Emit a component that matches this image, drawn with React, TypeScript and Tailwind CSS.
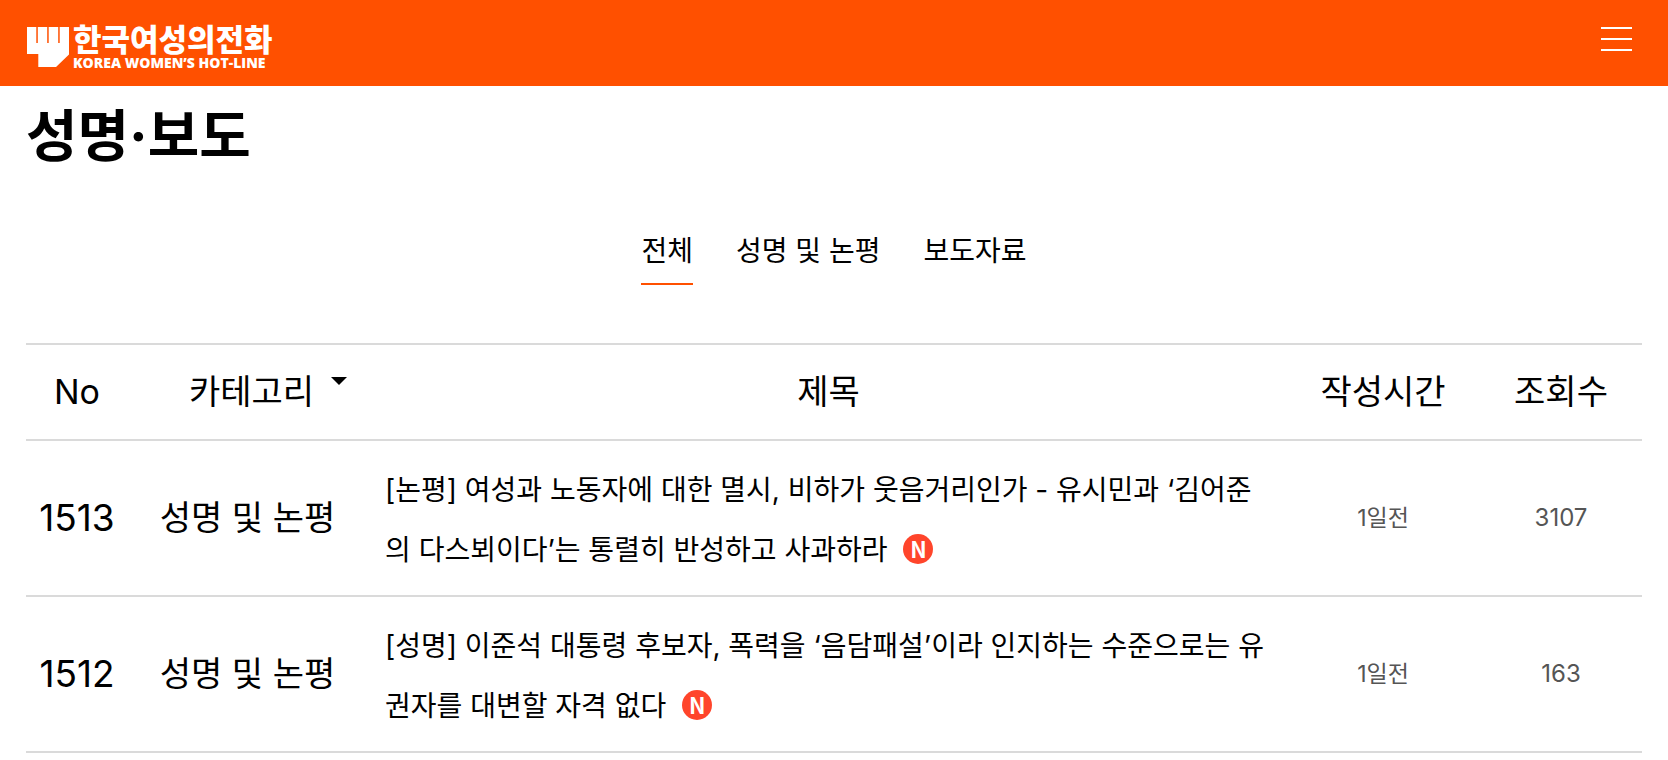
import React from 'react';

interface Post {
  id: number;
  category: string;
  title: string;
  time: string;
  views: number;
  isNew?: boolean;
}

const tabs = ['전체', '성명 및 논평', '보도자료'];

const posts: Post[] = [
  {
    id: 1513,
    category: '성명 및 논평',
    title: '[논평] 여성과 노동자에 대한 멸시, 비하가 웃음거리인가 - 유시민과 ‘김어준의 다스뵈이다’는 통렬히 반성하고 사과하라',
    time: '1일전',
    views: 3107,
    isNew: true,
  },
  {
    id: 1512,
    category: '성명 및 논평',
    title: '[성명] 이준석 대통령 후보자, 폭력을 ‘음담패설’이라 인지하는 수준으로는 유권자를 대변할 자격 없다',
    time: '1일전',
    views: 163,
    isNew: true,
  },
];

const Logo: React.FC = () => (
  <a href="#" className="flex items-start gap-1 text-white">
    <svg viewBox="0 0 42 40" className="mt-[3px] h-10 w-[42px]" fill="currentColor" aria-hidden="true">
      <path d="M0 0h9.300v16h1.500V0h9.400v16h1.500V0h9.500v16h1.500V0H42v27.500L29 40H11.300V27H0z" />
    </svg>
    <span className="flex flex-col">
      <span className="text-[31px] leading-8 font-black">한국여성의전화</span>
      <span className="font-['Open_Sans',sans-serif] text-[14px] leading-[14px] font-extrabold">
        KOREA WOMEN’S HOT-LINE
      </span>
    </span>
  </a>
);

const NewBadge: React.FC = () => (
  <span className="mb-1.5 ml-4 inline-flex size-[30px] items-center justify-center rounded-full bg-[#ff452b] pb-0.5 align-middle font-['Noto_Sans_CJK_KR',sans-serif] text-[22px] leading-7 font-bold text-white">
    N
  </span>
);

export default function App() {
  return (
    <div className="bg-white font-['Inter','Noto_Sans_CJK_KR',sans-serif] text-black">
      <header className="flex h-[86px] items-start justify-between bg-[#ff5000] px-[27px] pt-6">
        <Logo />
        <button type="button" aria-label="메뉴" className="mr-[9px] flex w-[31px] flex-col gap-[9px] pt-[3px]">
          <span className="h-0.5 w-full bg-white" />
          <span className="h-0.5 w-full bg-white" />
          <span className="h-0.5 w-full bg-white" />
        </button>
      </header>

      <main className="px-[26px]">
        <h1 className="pt-4 text-[56px] leading-[68px] font-bold">성명·보도</h1>

        <nav className="mt-[51px] flex justify-center gap-[43px] text-[28px] leading-[60px]">
          {tabs.map((tab, i) => (
            <a
              key={tab}
              href="#"
              className={i === 0 ? 'border-b-2 border-[#ff5000] pb-0.5' : 'border-b-2 border-transparent pb-0.5'}
            >
              {tab}
            </a>
          ))}
        </nav>

        <table className="mt-[58px] w-full table-fixed border-t-2 border-[#dadada]">
          <colgroup>
            <col className="w-[102px]" />
            <col className="w-[239px]" />
            <col />
            <col className="w-[194px]" />
            <col className="w-[162px]" />
          </colgroup>
          <thead>
            <tr className="h-24 border-b-2 border-[#dadada] text-[34px] leading-10">
              <th className="font-normal">No</th>
              <th className="font-normal">
                <button type="button" className="inline-flex gap-[17px] pl-[41px]">
                  카테고리
                  <svg viewBox="0 0 16 8" className="mt-[5px] h-2 w-4" fill="currentColor" aria-hidden="true">
                    <path d="M0 0h16L8 8z" />
                  </svg>
                </button>
              </th>
              <th className="pl-1 font-normal">제목</th>
              <th className="font-normal">작성시간</th>
              <th className="font-normal">조회수</th>
            </tr>
          </thead>
          <tbody>
            {posts.map((post) => (
              <tr key={post.id} className="border-b-2 border-[#dadada] text-center">
                <td className="text-[37px] leading-10">{post.id}</td>
                <td className="text-[34px] leading-10">{post.category}</td>
                <td className="pt-[19px] pr-[13px] pb-[15px] pl-[18px] text-left text-[28px] leading-[60px]">
                  <a href="#">{post.title}</a>
                  {post.isNew && <NewBadge />}
                </td>
                <td className="text-[23px] text-[#555]">{post.time}</td>
                <td className="text-2xl text-[#555]">{post.views}</td>
              </tr>
            ))}
          </tbody>
        </table>
      </main>
    </div>
  );
}
